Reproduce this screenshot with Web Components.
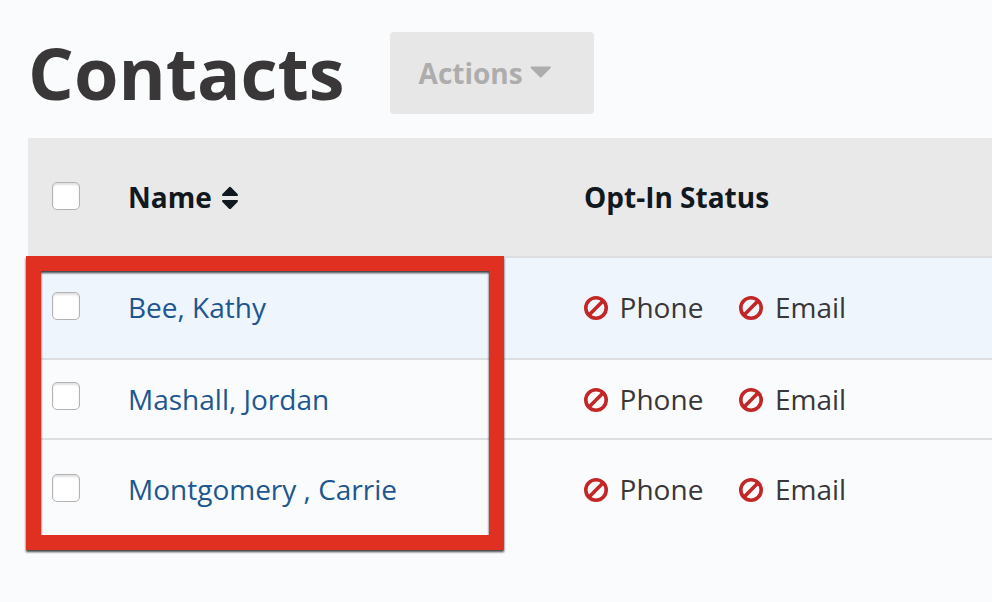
<!DOCTYPE html>
<html lang="en">
<head>
<meta charset="utf-8">
<title>Contacts</title>
<style>
  html, body {
    margin: 0;
    height: 100%;
    overflow: hidden;
  }
  body {
    background: #fafbfd;
    color: #393737;
    font-family: "Open Sans", "Noto Sans", sans-serif;
    font-size: 28px;
    line-height: 40px;
  }
</style>
</head>
<body>

<contacts-page>
  <page-header slot="header" title="Contacts">
    <action-button slot="actions">Actions</action-button>
  </page-header>
  <contact-table>
    <contact-row class="head" head>
      <span slot="name">Name</span>
      <span slot="status">Opt-In Status</span>
    </contact-row>
    <contact-row class="highlight">
      <span slot="name">Bee, Kathy</span>
      <opt-status slot="status">Phone</opt-status>
      <opt-status slot="status">Email</opt-status>
    </contact-row>
    <contact-row class="compact">
      <span slot="name">Mashall, Jordan</span>
      <opt-status slot="status">Phone</opt-status>
      <opt-status slot="status">Email</opt-status>
    </contact-row>
    <contact-row class="last">
      <span slot="name">Montgomery , Carrie</span>
      <opt-status slot="status">Phone</opt-status>
      <opt-status slot="status">Email</opt-status>
    </contact-row>
    <focus-frame slot="overlay"></focus-frame>
  </contact-table>
</contacts-page>

<script>
const define = (name, html, setup) => {
  const template = document.createElement('template');
  template.innerHTML = html;

  customElements.define(name, class extends HTMLElement {
    constructor() {
      super();
      this.attachShadow({ mode: 'open' });
      this.shadowRoot.appendChild(template.content.cloneNode(true));
    }

    connectedCallback() {
      if (setup) setup(this, this.shadowRoot);
    }
  });
};

define('contacts-page', /* html */`
<slot name="header"></slot>
<slot></slot>

<style>
  :host {
    display: flex;
    flex-direction: column;
    gap: 24px;
    box-sizing: border-box;
    height: 602px;
    padding: 32px 0 0 28px;
  }
</style>
`);

define('page-header', /* html */`
<h1></h1>
<slot name="actions"></slot>

<style>
  :host {
    display: flex;
    gap: 45px;
    height: 82px;
  }
  h1 {
    margin: 0;
    font-size: 72px;
    font-weight: 700;
    line-height: 80px;
  }
</style>
`, (host, root) => {
  root.querySelector('h1').textContent = host.getAttribute('title');
});

define('action-button', /* html */`
<button disabled>
  <slot></slot>
  <svg width="22" height="13" viewBox="0 0 22 13">
    <path d="M1.7 0.5H19.8Q21.8 0.7 20.4 2.3L11.8 11Q10.7 12 9.7 11L1 2.3Q-.2 .7 1.7 .5Z" fill="#adadad"/>
  </svg>
</button>

<style>
  :host {
    display: block;
  }
  button {
    display: flex;
    gap: 7px;
    width: 204px;
    height: 82px;
    padding: 21px 0 0 29px;
    border: 0;
    border-radius: 4px;
    background: #e7e7e7;
    color: #adadad;
    font: inherit;
    font-weight: 700;
    align-items: flex-start;
    box-sizing: border-box;
  }
  svg {
    margin-top: 13px;
  }
</style>
`);

define('contact-table', /* html */`
<slot></slot>
<slot name="overlay"></slot>

<style>
  :host {
    display: block;
    position: relative;
  }
</style>
`);

define('check-box', /* html */`
<input type="checkbox">

<style>
  :host {
    display: block;
    width: 28px;
    height: 28px;
  }
  input {
    display: block;
    appearance: none;
    box-sizing: border-box;
    width: 28px;
    height: 28px;
    margin: 0;
    border: 1px solid #b2b2b2;
    border-radius: 5px;
    background: #fff;
    box-shadow: inset 0 2px 2px rgba(0, 0, 0, .12);
  }
</style>
`);

define('contact-row', /* html */`
<check-box></check-box>
<div class="name"><slot name="name"></slot></div>
<div class="status"><slot name="status"></slot></div>

<style>
  :host {
    display: grid;
    grid-template-columns: 76px 456px 1fr;
    align-items: start;
    box-sizing: border-box;
    height: 102px;
    padding: 29px 0 0 24px;
    border-bottom: 2px solid #dddee0;
    --check-offset: 5px;
  }
  :host(.head) {
    height: 120px;
    padding-top: 39px;
    background: #e9e9e9;
    color: #111820;
    font-weight: 700;
  }
  :host(.highlight) {
    background: #eef5fd;
  }
  :host(.compact) {
    height: 80px;
    padding-top: 19px;
    --check-offset: 3px;
  }
  :host(.last) {
    border-bottom: 0;
  }
  check-box {
    margin-top: var(--check-offset);
  }
  .name {
    display: flex;
    gap: 9px;
    color: #20568f;
    white-space: pre;
  }
  :host(.head) .name {
    color: inherit;
  }
  .name svg {
    margin-top: 9px;
  }
  .status {
    display: flex;
    gap: 36px;
  }
</style>
`, (host, root) => {
  if (!host.hasAttribute('head')) return;
  root.querySelector('.name').insertAdjacentHTML('beforeend', /* html */`
<svg width="18" height="24" viewBox="0 0 18 24">
  <path d="M9 .8Q9.6 .8 10.2 1.4L16.8 8.2Q17.4 9.8 16.2 10H1.8Q.6 9.8 1.2 8.2L7.8 1.4Q8.4 .8 9 .8ZM1.8 14H16.2Q17.4 14.2 16.8 15.8L10.2 22.5Q9 23.5 7.8 22.5L1.2 15.8Q.6 14.2 1.8 14Z" fill="#111820"/>
</svg>`);
});

define('opt-status', /* html */`
<svg width="24" height="24" viewBox="0 0 24 24" fill="none" stroke="#c22626" stroke-width="3.6">
  <circle cx="12" cy="12" r="10.2"/>
  <path d="M4.8 19.2L19.2 4.8"/>
</svg>
<slot></slot>

<style>
  :host {
    display: flex;
    gap: 11.6px;
  }
  svg {
    margin-top: 9px;
  }
</style>
`);

// Callout box around the name column, laid over the rows
define('focus-frame', /* html */`
<style>
  :host {
    position: absolute;
    left: -2px;
    top: 118px;
    width: 478px;
    height: 294px;
    box-sizing: border-box;
    border: 15px solid #e03022;
    border-top-width: 15.5px;
    filter: drop-shadow(0 2px 1px rgba(0, 0, 0, .75));
    pointer-events: none;
  }
</style>
`);
</script>
</body>
</html>
